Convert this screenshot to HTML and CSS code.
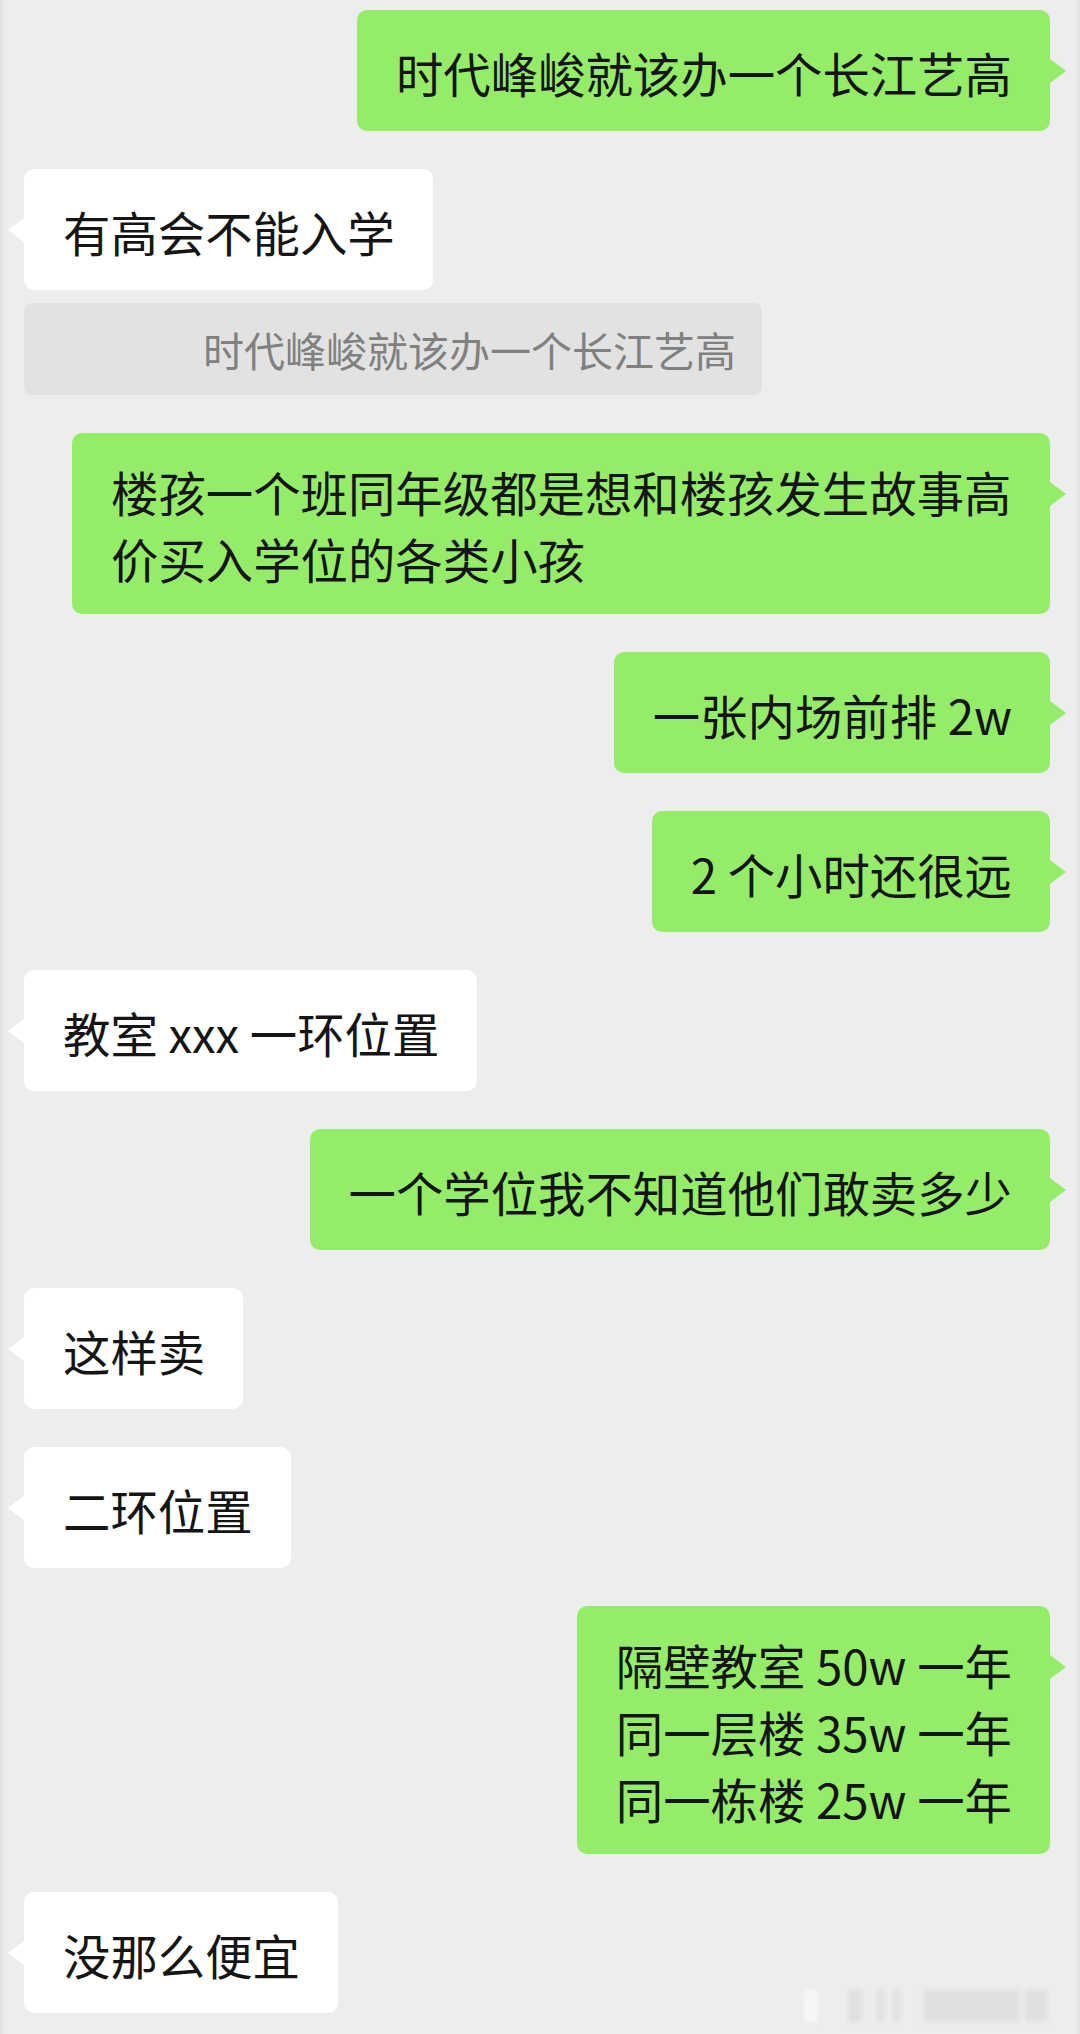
FILE: index.html
```html
<!DOCTYPE html>
<html lang="zh-CN">

<head>
  <meta charset="UTF-8">
  <meta name="viewport" content="width=device-width, initial-scale=1.0">
  <title>聊天记录</title>
  <link rel="stylesheet" href="styles.css">
</head>

<body>
  <div class="chat">
    <div class="msg mine">
      <div class="bubble">时代峰峻就该办一个长江艺高</div>
    </div>

    <div class="msg theirs">
      <div class="bubble">有高会不能入学</div>
      <div class="quote"><span class="quote-name"></span>时代峰峻就该办一个长江艺高</div>
    </div>

    <div class="msg mine">
      <div class="bubble wide">楼孩一个班同年级都是想和楼孩发生故事高价买入学位的各类小孩</div>
    </div>

    <div class="msg mine">
      <div class="bubble">一张内场前排 2w</div>
    </div>

    <div class="msg mine">
      <div class="bubble">2 个小时还很远</div>
    </div>

    <div class="msg theirs">
      <div class="bubble">教室 xxx 一环位置</div>
    </div>

    <div class="msg mine">
      <div class="bubble">一个学位我不知道他们敢卖多少</div>
    </div>

    <div class="msg theirs">
      <div class="bubble">这样卖</div>
    </div>

    <div class="msg theirs">
      <div class="bubble">二环位置</div>
    </div>

    <div class="msg mine">
      <div class="bubble">隔壁教室 50w 一年<br>同一层楼 35w 一年<br>同一栋楼 25w 一年</div>
    </div>

    <div class="msg theirs">
      <div class="bubble">没那么便宜</div>
    </div>
  </div>

  <!-- faded watermark in the corner -->
  <div class="watermark">
    <span class="wm-a"></span>
    <span class="wm-b"></span>
    <span class="wm-c"></span>
    <span class="wm-d"></span>
    <span class="wm-e"></span>
    <span class="wm-f"></span>
  </div>
</body>

</html>
```

FILE: styles.css
```css
body {
  margin: 0;
  padding: 0;
  background-color: #ededed;
  font-family: "Noto Sans CJK SC", "Noto Sans", sans-serif;
  color: #151515;
}

.chat {
  display: flex;
  flex-direction: column;
  gap: 38px;
  min-height: 2034px;
  box-sizing: border-box;
  padding: 10px 30px 0 24px;
  border-left: 3px solid #e2e2e2;
  border-right: 3px solid #e4e4e4;
}

.msg {
  display: flex;
  flex-direction: column;
  gap: 13px;
}

.mine {
  align-items: flex-end;
}

.theirs {
  align-items: flex-start;
}

.bubble {
  position: relative;
  display: flex;
  align-items: center;
  box-sizing: border-box;
  min-height: 121px;
  max-width: 978px;
  padding: 25px 38px 22px 39px;
  border-radius: 10px;
  font-size: 47.4px;
  line-height: 67px;
  background-color: #fff;
}

.mine .bubble {
  background-color: #95ec69;
  margin-right: -3px;
}

.theirs .bubble {
  margin-left: -3px;
}

/* the little pointer on the side of each bubble */
.bubble::after {
  content: "";
  position: absolute;
  top: 49px;
  border-top: 12px solid transparent;
  border-bottom: 12px solid transparent;
}

.mine .bubble::after {
  right: -16px;
  border-left: 16px solid #95ec69;
}

.theirs .bubble::after {
  left: -16px;
  border-right: 16px solid #fff;
}

.quote {
  margin-left: -3px;
  height: 92px;
  padding: 0 26px 0 0;
  border-radius: 8px;
  background-color: #e2e2e2;
  color: #808080;
  font-size: 41px;
  line-height: 92px;
  white-space: nowrap;
}

.quote-name {
  display: inline-block;
  width: 179px;
}

.watermark {
  position: absolute;
  top: 1990px;
  left: 800px;
  width: 270px;
  height: 32px;
  filter: blur(2px);
}

.watermark span {
  position: absolute;
  top: 0;
  height: 32px;
  background-color: #e0e0e0;
}

.wm-a {
  left: 4px;
  width: 14px;
  background-color: #f6f6f6 !important;
}

.wm-b {
  left: 48px;
  width: 14px;
}

.wm-c {
  left: 77px;
  width: 7px;
}

.wm-d {
  left: 93px;
  width: 7px;
}

.wm-e {
  left: 123px;
  width: 97px;
}

.wm-f {
  left: 225px;
  width: 22px;
}
```
